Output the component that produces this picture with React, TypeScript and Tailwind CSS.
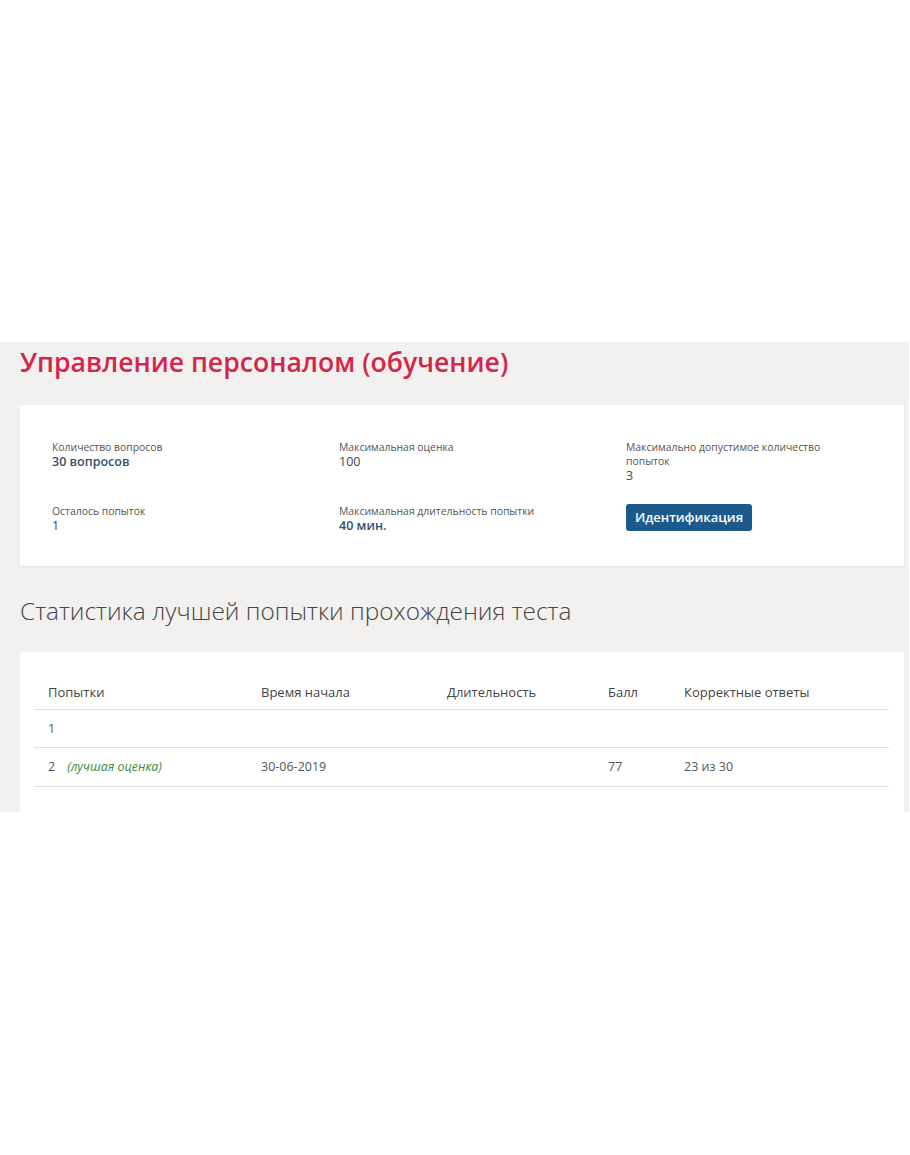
const font = { fontFamily: '"Open Sans", "Noto Sans", sans-serif' };

function Info({ label, value, tone }: { label: string; value: string; tone?: 'bold' | 'blue' }) {
  const valueClass =
    tone === 'bold'
      ? 'text-[12.5px] leading-[15px] font-semibold text-[#33506e]'
      : tone === 'blue'
        ? 'text-[12.5px] leading-[15px] text-[#2c4a6a]'
        : 'text-[12.5px] leading-[15px] text-[#444]';
  return (
    <div className="flex flex-col">
      <span className="text-[10.4px] leading-[14px] text-[#555] w-[208px]">{label}</span>
      <span className={valueClass}>{value}</span>
    </div>
  );
}

const rows = [
  { n: '1', best: false, start: '', dur: '', score: '', correct: '' },
  { n: '2', best: true, start: '30-06-2019', dur: '', score: '77', correct: '23 из 30' },
];

export default function App() {
  return (
    <div className="w-[910px] h-[1155px] bg-white" style={font}>
      <div className="h-[342px]" />
      <div className="w-[909px] h-[470px] bg-[#f2f1f0] px-5 overflow-hidden">
        <h1 className="pt-[2px] text-[26.6px] leading-[36px] font-semibold text-[#d4264b]">
          Управление персоналом (обучение)
        </h1>

        <div className="mt-[25px] w-[884px] h-[161px] bg-white rounded-[2px] shadow-[0_1px_2px_rgba(0,0,0,0.06)] pl-8 pt-[35px]">
          <div className="grid grid-cols-[287px_287px_1fr] gap-y-[21px]">
            <Info label="Количество вопросов" value="30 вопросов" tone="bold" />
            <Info label="Максимальная оценка" value="100" />
            <Info label="Максимально допустимое количество попыток" value="3" />
            <Info label="Осталось попыток" value="1" tone="blue" />
            <Info label="Максимальная длительность попытки" value="40 мин." tone="bold" />
            <div>
              <button className="w-[126px] h-[27px] rounded-[3px] bg-[#1c5a8c] text-white text-[13px] font-semibold">
                Идентификация
              </button>
            </div>
          </div>
        </div>

        <h2 className="mt-[29px] text-[24.4px] leading-[32px] font-light text-[#454545]">
          Статистика лучшей попытки прохождения теста
        </h2>

        <div className="mt-[25px] w-[884px] h-[200px] bg-white rounded-[2px] px-[14px] pt-[23px]">
          <table className="w-[855px] border-collapse">
            <thead>
              <tr className="h-[34px] border-b border-[#dedede] text-left text-[13px] text-[#444]">
                <th className="w-[213px] pl-[14px] pt-[1px] font-medium">Попытки</th>
                <th className="w-[186px] pl-[14px] pt-[1px] font-medium">Время начала</th>
                <th className="w-[161px] pl-[14px] pt-[1px] font-medium">Длительность</th>
                <th className="w-[76px] pl-[14px] pt-[1px] font-medium">Балл</th>
                <th className="pl-[14px] pt-[1px] font-medium">Корректные ответы</th>
              </tr>
            </thead>
            <tbody>
              {rows.map((r) => (
                <tr key={r.n} className="h-[38.5px] border-b border-[#dedede] text-[12.5px] text-[#555]">
                  <td className="pl-[14px] pt-[2px]">
                    {r.n}
                    {r.best && (
                      <span className="ml-[12px] text-[12.4px] italic text-[#3b8a3e]">(лучшая оценка)</span>
                    )}
                  </td>
                  <td className="pl-[14px] pt-[2px]">{r.start}</td>
                  <td className="pl-[14px] pt-[2px]">{r.dur}</td>
                  <td className="pl-[14px] pt-[2px]">{r.score}</td>
                  <td className="pl-[14px] pt-[2px]">{r.correct}</td>
                </tr>
              ))}
            </tbody>
          </table>
        </div>
      </div>
    </div>
  );
}
